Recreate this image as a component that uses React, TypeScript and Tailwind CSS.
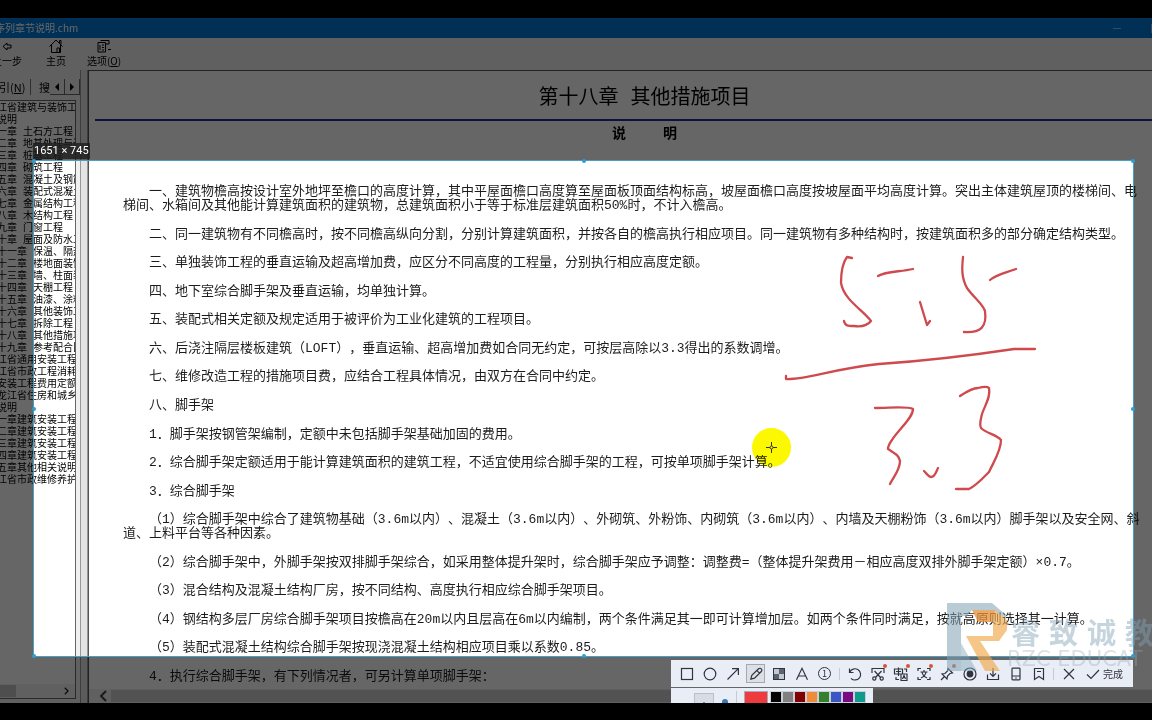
import type { ReactNode } from "react";

const chapters = [
  "江省建筑与装饰工程",
  "说明",
  "一章 土石方工程",
  "二章 地基处理与边",
  "三章 桩基工程",
  "四章 砌筑工程",
  "五章 混凝土及钢筋",
  "六章 装配式混凝土",
  "七章 金属结构工程",
  "八章 木结构工程",
  "九章 门窗工程",
  "十章 屋面及防水工",
  "十一章 保温、隔热",
  "十二章 楼地面装饰",
  "十三章 墙、柱面装",
  "十四章 天棚工程",
  "十五章 油漆、涂料",
  "十六章 其他装饰工",
  "十七章 拆除工程",
  "十八章 其他措施项",
  "十九章 参考配合比",
  "江省通用安装工程定",
  "江省市政工程消耗量",
  "安装工程费用定额",
  "龙江省住房和城乡建",
  "说明",
  "一章建筑安装工程费",
  "二章建筑安装工程费",
  "三章建筑安装工程费",
  "四章建筑安装工程费",
  "五章其他相关说明",
  "江省市政维修养护工",
];

const paragraphs: string[][] = [
  [
    "一、建筑物檐高按设计室外地坪至檐口的高度计算，其中平屋面檐口高度算至屋面板顶面结构标高，坡屋面檐口高度按坡屋面平均高度计算。突出主体建筑屋顶的楼梯间、电",
    "梯间、水箱间及其他能计算建筑面积的建筑物，总建筑面积小于等于标准层建筑面积50%时，不计入檐高。",
  ],
  ["二、同一建筑物有不同檐高时，按不同檐高纵向分割，分别计算建筑面积，并按各自的檐高执行相应项目。同一建筑物有多种结构时，按建筑面积多的部分确定结构类型。"],
  ["三、单独装饰工程的垂直运输及超高增加费，应区分不同高度的工程量，分别执行相应高度定额。"],
  ["四、地下室综合脚手架及垂直运输，均单独计算。"],
  ["五、装配式相关定额及规定适用于被评价为工业化建筑的工程项目。"],
  ["六、后浇注隔层楼板建筑（LOFT），垂直运输、超高增加费如合同无约定，可按层高除以3.3得出的系数调增。"],
  ["七、维修改造工程的措施项目费，应结合工程具体情况，由双方在合同中约定。"],
  ["八、脚手架"],
  ["1．脚手架按钢管架编制，定额中未包括脚手架基础加固的费用。"],
  ["2．综合脚手架定额适用于能计算建筑面积的建筑工程，不适宜使用综合脚手架的工程，可按单项脚手架计算。"],
  ["3．综合脚手架"],
  [
    "（1）综合脚手架中综合了建筑物基础（3.6m以内）、混凝土（3.6m以内）、外砌筑、外粉饰、内砌筑（3.6m以内）、内墙及天棚粉饰（3.6m以内）脚手架以及安全网、斜",
    "道、上料平台等各种因素。",
  ],
  ["（2）综合脚手架中，外脚手架按双排脚手架综合，如采用整体提升架时，综合脚手架应予调整：调整费=（整体提升架费用－相应高度双排外脚手架定额）×0.7。"],
  ["（3）混合结构及混凝土结构厂房，按不同结构、高度执行相应综合脚手架项目。"],
  ["（4）钢结构多层厂房综合脚手架项目按檐高在20m以内且层高在6m以内编制，两个条件满足其一即可计算增加层。如两个条件同时满足，按就高原则选择其一计算。"],
  ["（5）装配式混凝土结构综合脚手架按现浇混凝土结构相应项目乘以系数0.85。"],
  ["4．执行综合脚手架，有下列情况者，可另计算单项脚手架："],
];

function Glyph({ children, className = "" }: { children: ReactNode; className?: string }) {
  return (
    <svg
      viewBox="0 0 16 16"
      className={`size-4 ${className}`}
      fill="none"
      stroke="currentColor"
      strokeWidth="1.2"
      aria-hidden="true"
    >
      {children}
    </svg>
  );
}

type Tool = { name: string; icon: ReactNode; active?: boolean; dot?: boolean };

const drawTools: Tool[] = [
  { name: "矩形", icon: <Glyph><rect x="2.5" y="2.5" width="11" height="11" /></Glyph> },
  { name: "椭圆", icon: <Glyph><circle cx="8" cy="8" r="5.8" /></Glyph> },
  { name: "箭头", icon: <Glyph><path d="M2.5 13.5 13.3 2.7M7 2.6h6.4V9" /></Glyph> },
  {
    name: "画笔",
    active: true,
    icon: <Glyph><path d="M2.8 13.2 3.800 9.400 10.600 2.800a1.900 1.900 0 0 1 2.700 2.700L6.500 12.200zM9 4.600l2.500 2.500" /></Glyph>,
  },
  {
    name: "马赛克",
    icon: (
      <Glyph>
        <path d="M2.500 2.500H8V8H2.500zM8 8h5.500v5.500H8z" fill="#c3c8d1" stroke="none" />
        <path d="M8 2.500h5.500V8H8zM2.500 8H8v5.500H2.500z" fill="#5d636e" stroke="none" />
        <rect x="2.500" y="2.500" width="11" height="11" strokeWidth="1" />
      </Glyph>
    ),
  },
  { name: "文字", icon: <Glyph><path d="M2.500 13.800 8 2.300l5.500 11.500M4.500 10h7" /></Glyph> },
  {
    name: "序号",
    icon: <span className="flex size-[13px] items-center justify-center rounded-full border border-[#30343c] text-[9px] leading-none">1</span>,
  },
];

const actionTools: Tool[] = [
  { name: "撤销", icon: <Glyph><path d="M2.500 2.500v4h4M2.800 6.300A5.600 5.600 0 1 1 4 12.300" /></Glyph> },
  {
    name: "裁剪",
    dot: true,
    icon: <Glyph><path d="M2 7V2.500h12V7M4.500 5l6 6.500M11.500 5l-6 6.500" /><circle cx="4.300" cy="12.500" r="1.600" /><circle cx="11.700" cy="12.500" r="1.600" /></Glyph>,
  },
  {
    name: "翻译",
    dot: true,
    icon: <Glyph><path d="M1.500 3h8v5h-8zM5.500 1.500V10M3 5.500h5M8 8h6v6.500H8zM9.500 13l1.500-3.500 1.500 3.500M3 11v2.500h3M11 3h2.500v3" /></Glyph>,
  },
  {
    name: "文字识别",
    dot: true,
    icon: <Glyph><path d="M2 5V2.500h3M11 2.500h3V5M2 11v2.500h3M11 13.500h3V11M4.500 6h7M8 4v2M5 12c2-1 4.500-3 5-6M6 6c.5 3 3 5 5 6" /></Glyph>,
  },
  {
    name: "钉住",
    dot: true,
    icon: <Glyph><path d="M9 2.500l4.500 4.500-2.500.500-2.500 2.500-.500 3L3 8l3-.500L8.500 5zM5.500 10.500 2 14" /></Glyph>,
  },
  {
    name: "录制",
    icon: <Glyph><circle cx="8" cy="8" r="6" /><circle cx="8" cy="8" r="2.800" fill="currentColor" /></Glyph>,
  },
  { name: "保存", icon: <Glyph><path d="M8 2v8M5 7.300l3 3 3-3M2.500 8.500v5h11v-5" /></Glyph> },
  { name: "发送到手机", icon: <Glyph><rect x="4" y="2.200" width="8" height="11.600" rx="0.800" /><path d="M4 10h8M7.200 12h1.600" /></Glyph> },
  { name: "收藏", icon: <Glyph><path d="M3.500 2.500h9v11L8 10.500l-4.500 3zM6 5.500h4" /></Glyph> },
];

function ToolButton({ tool }: { tool: Tool }) {
  return (
    <button
      type="button"
      aria-label={tool.name}
      className={
        tool.active
          ? "relative flex size-[19px] items-center justify-center border border-[#a3a8b1] bg-[#dcdfe6]"
          : "relative flex size-[19px] items-center justify-center"
      }
    >
      {tool.icon}
      {tool.dot && <span className="absolute right-0 top-0 size-1 rounded-full bg-[#d9533c]" />}
    </button>
  );
}

const swatches = [
  { name: "黑色", color: "bg-[#000000]" },
  { name: "灰色", color: "bg-[#808080]" },
  { name: "深红", color: "bg-[#800000]" },
  { name: "橙色", color: "bg-[#ee8b3c]" },
  { name: "绿色", color: "bg-[#35802c]" },
  { name: "蓝色", color: "bg-[#3a56c4]" },
  { name: "紫色", color: "bg-[#7a0a80]" },
  { name: "青色", color: "bg-[#0f9a8c]" },
];

function TopBar() {
  return (
    <>
      <header className="flex h-5 shrink-0 items-center justify-between overflow-hidden bg-[#0078d7] text-[10px] leading-5 text-white">
        <h1 className="-ml-[5px] whitespace-nowrap">序列章节说明.chm</h1>
        <div className="-mr-2 flex items-center gap-[30px]">
          <button type="button" aria-label="最小化" className="h-px w-2 bg-white/50" />
          <button type="button" aria-label="最大化" className="size-[9px] border border-white/50" />
        </div>
      </header>
      <nav className="flex h-8 shrink-0 items-start overflow-hidden bg-[#f0f0f0] text-[10px] leading-3 text-black">
        <button type="button" className="-ml-[8px] flex w-[30px] flex-col items-center gap-[1px]">
          <Glyph><path d="M4 8.500l4-3.500v2h4v3H8v2z" strokeWidth="1" /></Glyph>
          <span className="whitespace-nowrap">上一步</span>
        </button>
        <button type="button" className="ml-[18px] flex w-8 flex-col items-center gap-[1px]">
          <Glyph><path d="M1.500 8.500 8 2l6.500 6.500M3.500 7v7.500h9V7M9 14.500V10h2.500v4.500M11.500 5V2.500h1.500v4" strokeWidth="1" /></Glyph>
          <span>主页</span>
        </button>
        <button type="button" className="ml-[14px] flex w-9 flex-col items-center gap-[1px]">
          <Glyph><path d="M2 4.500h7.500V14H2zM4 7v5M6 7h2M6 9.500h2M6 12h2M4.500 2.500h8.500v3.500H9.500M12 11.500h3" strokeWidth="1" /></Glyph>
          <span className="whitespace-nowrap">选项(<u>O</u>)</span>
        </button>
      </nav>
    </>
  );
}

function Sidebar() {
  return (
    <aside className="flex w-20 shrink-0 flex-col overflow-hidden bg-[#f0f0f0] pb-1">
      <div className="flex h-[30px] items-center overflow-hidden pt-1 text-[11px] leading-4 [font-family:'Noto_Sans_CJK_SC',sans-serif]">
        <button type="button" className="-ml-[1px] w-8 whitespace-nowrap border-r border-[#777] text-left">
          引(<u>N</u>)
        </button>
        <button type="button" className="w-[19px] whitespace-nowrap pl-2 text-left">搜</button>
        <button type="button" aria-label="向左" className="flex h-4 w-[15px] items-center justify-center border-b border-r border-[#666]">
          <svg viewBox="0 0 4 8" className="h-2 w-1"><path d="M4 0v8L0 4z" /></svg>
        </button>
        <button type="button" aria-label="向右" className="flex h-4 w-[15px] items-center justify-center border-b border-r border-[#666]">
          <svg viewBox="0 0 4 8" className="h-2 w-1"><path d="M0 0v8l4-4z" /></svg>
        </button>
      </div>
      <div className="mr-1 flex min-h-0 flex-1 flex-col border-b border-r border-t border-[#666] bg-white">
        <ul className="min-h-0 flex-1 overflow-hidden pt-[2px] text-[10px] leading-3 text-black">
          {chapters.map((c, i) => (
            <li key={i} className="-ml-[3px] h-3 whitespace-nowrap">{c}</li>
          ))}
        </ul>
        <div className="flex h-[14px] shrink-0 items-center justify-between bg-[#f0f0f0] pr-[6px]">
          <span className="h-3 w-4 bg-[#c4c4c4]" />
          <svg viewBox="0 0 5 8" className="h-2 w-[5px]" fill="none" stroke="#222" strokeWidth="1.300"><path d="M.8.8 4 4 .8 7.200" /></svg>
        </div>
      </div>
    </aside>
  );
}

function DocumentPane() {
  return (
    <main className="flex min-w-0 flex-1 flex-col overflow-hidden border-l border-t border-[#555] bg-white text-[#1c1c1c]">
      <h2 className="ml-12 mt-4 text-center text-[20px] leading-6 text-black">第十八章 其他措施项目</h2>
      <hr className="ml-[6px] mt-2 border-t-2 border-[#2c2c9c]" />
      <h3 className="ml-12 mt-[3px] flex justify-center gap-[37px] text-[14px] leading-5 font-bold text-black">
        <span>说</span>
        <span>明</span>
      </h3>
      <article className="mt-[41px] flex min-h-0 flex-1 flex-col justify-between pb-[5px] pl-[34px] text-[13px] leading-[14px] [text-spacing-trim:space-all]">
        {paragraphs.map((lines, i) => (
          <p key={i} className="whitespace-nowrap indent-[26px]">
            {lines.map((line, j) => (
              <span key={j}>
                {j > 0 && <br />}
                {line}
              </span>
            ))}
          </p>
        ))}
      </article>
      <div className="flex h-[14px] shrink-0 items-center gap-1 bg-[#f0f0f0] pl-[10px]">
        <svg viewBox="0 0 8 12" className="h-3 w-2" fill="none" stroke="#444" strokeWidth="2"><path d="M7 1 2 6l5 5" /></svg>
        <span className="h-3 flex-1 bg-[#cdcdcd]" />
      </div>
    </main>
  );
}

function Watermark() {
  return (
    <div className="pointer-events-none absolute bottom-[28px] left-[947px] flex whitespace-nowrap">
      <svg viewBox="0 0 60 72" className="h-[72px] w-[60px] shrink-0" aria-hidden="true">
        <path d="M0 0h45l14 12v4L47 7H25l-5 6h-6v55H0z" fill="#7fa3b5" fillOpacity="0.550" />
        <path d="M14 40 30 68H14z" fill="#7fa3b5" fillOpacity="0.450" />
        <path d="M25 7h23l12 10v10l-8 11H33l20 30H38L19 33h27V19H31z" fill="#f0a848" fillOpacity="0.650" />
        <path d="M25 7h23l-3 12H31z" fill="#d9772f" fillOpacity="0.350" />
      </svg>
      <div className="pt-[10px]">
        <p className="flex gap-[9px] pl-1 text-[29px] font-bold leading-9 text-[#7f9fb3]/45">
          <span>睿</span><span>致</span><span>诚</span><span>教</span>
        </p>
        <p className="text-[21px] leading-5 text-[#96a5b2]/35 [font-family:'DejaVu_Sans',sans-serif]">RZC EDUCAT</p>
      </div>
    </div>
  );
}

function Handwriting() {
  return (
    <svg viewBox="0 0 300 260" className="absolute left-[726px] top-[81px] h-[260px] w-[300px] overflow-visible" aria-hidden="true">
      <circle cx="11.500" cy="206.500" r="19.500" fill="#fbf800" />
      <g stroke="#333" strokeWidth="1" fill="none">
        <path d="M11.500 201v4M11.500 208v4M6 206.500h4M13 206.500h4" />
        <circle cx="11.500" cy="206.500" r="1.500" />
      </g>
      <g fill="none" stroke="#cf4a4e" strokeWidth="2.300" strokeLinecap="round" strokeLinejoin="round">
        <path d="M92 17l-5-1c-3 4-6 13-6 26 3 17 22 27 30 38-3 4-9 6-17 5-6 0-9 0-10-5" />
        <path d="M118 35c8-5 22-4 35-7" />
        <path d="M160 61l7 23 3-4" />
        <path d="M203 16c-1 10-2 20 4 31 7 10 15 15 18 23 2 16-4 22-21 21" />
        <path d="M230 39c7-6 15-7 26-11" />
        <path d="M26 135v3c20 1 45-10 93-15 45-3 95-9 135-15h21" />
        <path d="M115 167c15 0 33-2 38 1 0 9-14 20-21 31-3 4-4 7-4 9 6 4 11 6 12 12 0 9-6 15-10 23" />
        <path d="M164 230c3 3 5 6 7 6 4 0 5-5 7-9" />
        <path d="M200 155c6-4 12-8 18-8 4-1 9-2 11 0 2 9-4 17-7 26-1 5-3 10-1 14 6 6 15 6 20 12 0 11-7 21-12 32-6 6-13 14-20 17h-13" />
      </g>
    </svg>
  );
}

const handles = [
  "-left-[2px] -top-[2px]",
  "left-1/2 -top-[2px] -translate-x-1/2",
  "-right-[2px] -top-[2px]",
  "-left-[2px] top-1/2 -translate-y-1/2",
  "-right-[2px] top-1/2 -translate-y-1/2",
  "-left-[2px] -bottom-[2px]",
  "left-1/2 -bottom-[2px] -translate-x-1/2",
  "-right-[2px] -bottom-[2px]",
];

function Selection() {
  return (
    <>
      <div className="absolute bottom-[46px] left-[33px] right-[18px] top-[142px] border border-[#4a9fc4] shadow-[0_0_0_2000px_rgba(0,0,0,0.6)]">
        {handles.map((h) => (
          <span key={h} className={`absolute size-1 rounded-full bg-[#2f9fcf] ${h}`} />
        ))}
        <span className="absolute -left-px -top-[18px] whitespace-nowrap bg-[#1e1e1e]/80 px-[1px] text-[11px] leading-4 text-white [font-family:Roboto,sans-serif]">
          1651 × 745
        </span>
      </div>
      <div className="absolute bottom-[46px] left-[34px] right-[18px] top-[142px] mix-blend-multiply">
        <Handwriting />
      </div>
    </>
  );
}

function AnnotationBar() {
  return (
    <div className="absolute -bottom-[7px] right-[19px] flex flex-col items-start text-[#30343c]">
      <div role="toolbar" aria-label="截图标注" className="flex h-[27px] items-center bg-[#e9edf6] pl-[6px] pr-[10px]">
        <div className="flex gap-1">
          {drawTools.map((t) => <ToolButton key={t.name} tool={t} />)}
        </div>
        <span className="mx-[5px] h-3 w-px bg-[#c5cad3]" />
        <div className="flex gap-1">
          {actionTools.map((t) => <ToolButton key={t.name} tool={t} />)}
        </div>
        <span className="mx-[5px] h-3 w-px bg-[#c5cad3]" />
        <div className="flex items-center gap-1">
          <ToolButton tool={{ name: "取消", icon: <Glyph><path d="M3 3l10 10M13 3 3 13" /></Glyph> }} />
          <button type="button" className="flex items-center gap-[2px] whitespace-nowrap pl-[3px] text-[10px] leading-4">
            <Glyph><path d="M2 8.500l4 4 8-8.500" /></Glyph>
            完成
          </button>
        </div>
      </div>
      <div className="mt-px flex h-[22px] items-start bg-[#e9edf6] px-[7px] pt-[3px]">
        <button type="button" aria-label="细线" className="ml-4 mt-[2px] flex size-5 items-center justify-center border border-[#b9bec8] bg-[#d8dce5]">
          <span className="size-[2px] rounded-full bg-[#3b78b8]" />
        </button>
        <button type="button" aria-label="中线" className="ml-2 mt-2 size-[6px] rounded-full bg-[#3b78b8]" />
        <span className="ml-[8px] h-5 w-px bg-[#c5cad3]" />
        <button type="button" aria-label="当前颜色" className="ml-[7px] h-5 w-6 border border-[#aab] bg-[#ee3b3e]" />
        <div className="ml-[2px] flex">
          {swatches.map((s) => (
            <button key={s.name} type="button" aria-label={s.name} className={`h-3 w-3 border border-[#c9ced8] ${s.color}`} />
          ))}
        </div>
      </div>
    </div>
  );
}

export default function App() {
  return (
    <div className="flex h-screen flex-col bg-black pb-[17px] pt-[18px]">
      <div className="relative flex min-h-0 flex-1 flex-col overflow-hidden [font-family:'Noto_Sans_CJK_SC',sans-serif]">
        <TopBar />
        <div className="flex min-h-0 flex-1 bg-[#f0f0f0] [font-family:'Liberation_Mono','Noto_Sans_CJK_SC',monospace]">
          <Sidebar />
          <div className="w-2 shrink-0 border-l border-r border-[#999] bg-[#e4e4e4]" />
          <DocumentPane />
        </div>
        <Selection />
        <AnnotationBar />
        <Watermark />
      </div>
    </div>
  );
}
